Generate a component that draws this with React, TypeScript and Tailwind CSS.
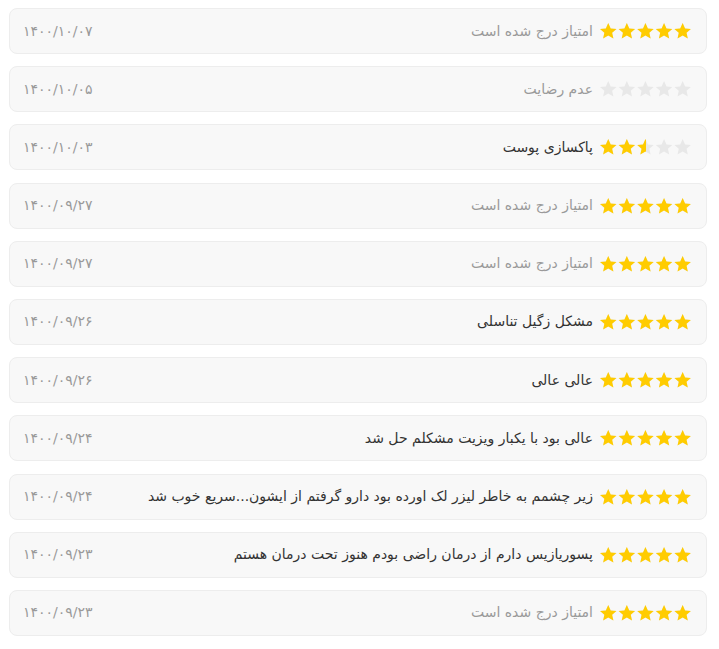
const reviews = [
  { date: '۱۴۰۰/۱۰/۰۷', rating: 5, text: 'امتیاز درج شده است', muted: true },
  { date: '۱۴۰۰/۱۰/۰۵', rating: 0, text: 'عدم رضایت', muted: true },
  { date: '۱۴۰۰/۱۰/۰۳', rating: 2.5, text: 'پاکسازی پوست', muted: false },
  { date: '۱۴۰۰/۰۹/۲۷', rating: 5, text: 'امتیاز درج شده است', muted: true },
  { date: '۱۴۰۰/۰۹/۲۷', rating: 5, text: 'امتیاز درج شده است', muted: true },
  { date: '۱۴۰۰/۰۹/۲۶', rating: 5, text: 'مشکل زگیل تناسلی', muted: false },
  { date: '۱۴۰۰/۰۹/۲۶', rating: 5, text: 'عالی عالی', muted: false },
  { date: '۱۴۰۰/۰۹/۲۴', rating: 5, text: 'عالی بود با یکبار ویزیت مشکلم حل شد', muted: false },
  { date: '۱۴۰۰/۰۹/۲۴', rating: 5, text: 'زیر چشمم به خاطر لیزر لک اورده بود دارو گرفتم از ایشون...سریع خوب شد', muted: false },
  { date: '۱۴۰۰/۰۹/۲۳', rating: 5, text: 'پسوریازیس دارم از درمان راضی بودم هنوز تحت درمان هستم', muted: false },
  { date: '۱۴۰۰/۰۹/۲۳', rating: 5, text: 'امتیاز درج شده است', muted: true }
]

function StarRow({ color }: { color: string }) {
  const star = 'M9.25 0.6l2.45 5.3 5.8.55-4.35 3.9 1.25 5.7-5.15-2.95-5.15 2.95 1.25-5.7-4.35-3.9 5.8-.55z'
  return (
    <svg width="93" height="18" viewBox="0 0 93 18" className="block shrink-0">
      {[0, 1, 2, 3, 4].map((i) => (
        <path key={i} d={star} fill={color} transform={`translate(${i * 18.6} 0.5)`} />
      ))}
    </svg>
  )
}

function Stars({ rating }: { rating: number }) {
  return (
    <div dir="ltr" className="relative h-[18px] w-[93px] shrink-0">
      <StarRow color="#e8e8e8" />
      <div className="absolute left-0 top-0 h-[18px] overflow-hidden" style={{ width: `${(rating / 5) * 93}px` }}>
        <StarRow color="#ffcc00" />
      </div>
    </div>
  )
}

export default function App() {
  return (
    <main dir="rtl" className="min-h-screen bg-white pl-[9px] pr-[12px] pt-[8px]" style={{ fontFamily: '"DejaVu Sans", "Noto Sans", sans-serif' }}>
      <div className="flex flex-col gap-[12.2px]">
        {reviews.map((review, idx) => (
          <article key={idx} className="flex h-[46px] items-center justify-between rounded-lg border border-[#ededed] bg-[#f8f8f8] pl-[13px] pr-[14px]">
            <div className="flex items-center gap-[6px]">
              <Stars rating={review.rating} />
              <span className={`text-[14px] ${review.muted ? 'text-[#9a9a9a]' : 'text-[#333]'}`}>{review.text}</span>
            </div>
            <span className="text-[14px] text-[#9a9a9a]">{review.date}</span>
          </article>
        ))}
      </div>
    </main>
  )
}
